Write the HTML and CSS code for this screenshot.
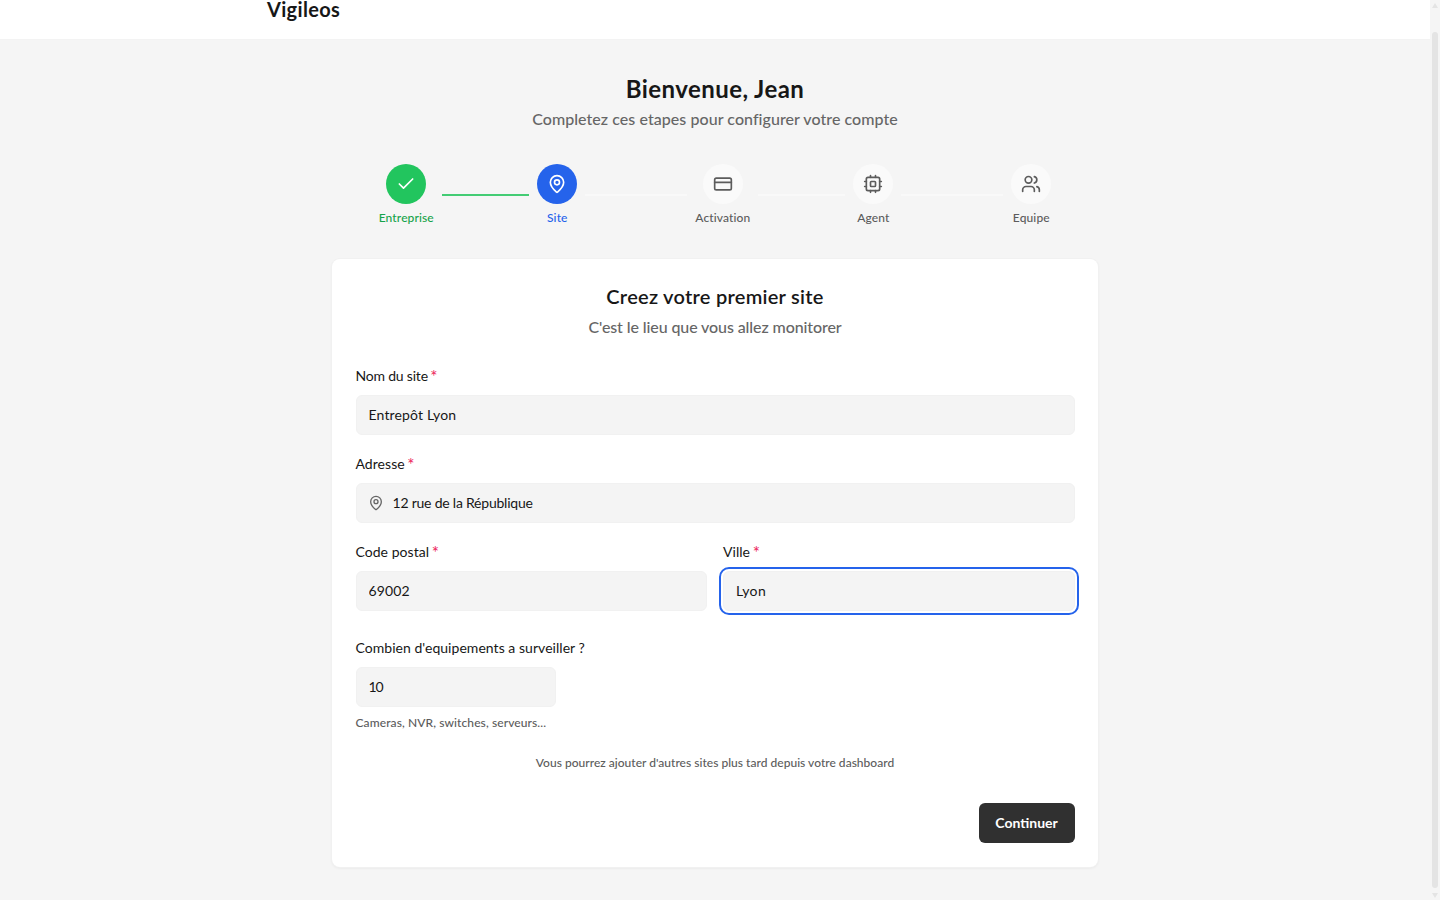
FILE: index.html
```html
<!DOCTYPE html>
<html lang="fr">
<head>
    <meta charset="UTF-8">
    <meta name="viewport" content="width=device-width, initial-scale=1.0">
    <title>Vigileos</title>
    <link rel="stylesheet" href="styles.css">
</head>
<body>
    <div class="page">
        <header class="header">
            <span class="logo">Vigileos</span>
        </header>
        <main class="main">
            <h1>Bienvenue, Jean</h1>
            <p class="intro">Completez ces etapes pour configurer votre compte</p>

            <!-- Etapes -->
            <div class="steps">
                <div class="step done">
                    <div class="circle">
                        <svg class="icon" viewBox="0 0 24 24"><path d="M20 6 9 17l-5-5"/></svg>
                    </div>
                    <span>Entreprise</span>
                </div>
                <div class="line line-done"></div>
                <div class="step current">
                    <div class="circle">
                        <svg class="icon" viewBox="0 0 24 24"><path d="M20 10c0 4.993-5.539 10.193-7.399 11.799a1 1 0 0 1-1.202 0C9.539 20.193 4 14.993 4 10a8 8 0 0 1 16 0"/><circle cx="12" cy="10" r="3"/></svg>
                    </div>
                    <span>Site</span>
                </div>
                <div class="line"></div>
                <div class="step">
                    <div class="circle">
                        <svg class="icon" viewBox="0 0 24 24"><rect width="20" height="14" x="2" y="5" rx="2"/><path d="M2 10h20"/></svg>
                    </div>
                    <span>Activation</span>
                </div>
                <div class="line"></div>
                <div class="step">
                    <div class="circle">
                        <svg class="icon" viewBox="0 0 24 24"><rect width="16" height="16" x="4" y="4" rx="2"/><rect width="6" height="6" x="9" y="9" rx="1"/><path d="M15 2v2M15 20v2M2 15h2M2 9h2M20 15h2M20 9h2M9 2v2M9 20v2"/></svg>
                    </div>
                    <span>Agent</span>
                </div>
                <div class="line"></div>
                <div class="step">
                    <div class="circle">
                        <svg class="icon" viewBox="0 0 24 24"><path d="M16 21v-2a4 4 0 0 0-4-4H6a4 4 0 0 0-4 4v2"/><circle cx="9" cy="7" r="4"/><path d="M22 21v-2a4 4 0 0 0-3-3.87M16 3.13a4 4 0 0 1 0 7.75"/></svg>
                    </div>
                    <span>Equipe</span>
                </div>
            </div>

            <!-- Formulaire du site -->
            <form class="card">
                <h2>Creez votre premier site</h2>
                <p class="subtitle">C'est le lieu que vous allez monitorer</p>

                <div class="field">
                    <label class="label-nom" for="nom">Nom du site <b>*</b></label>
                    <input class="input-nom" id="nom" type="text" value="Entrepôt Lyon">
                </div>
                <div class="field">
                    <label for="adresse">Adresse <b>*</b></label>
                    <div class="input-icon">
                        <svg class="icon" viewBox="0 0 24 24"><path d="M20 10c0 4.993-5.539 10.193-7.399 11.799a1 1 0 0 1-1.202 0C9.539 20.193 4 14.993 4 10a8 8 0 0 1 16 0"/><circle cx="12" cy="10" r="3"/></svg>
                        <input id="adresse" type="text" value="12 rue de la République">
                    </div>
                </div>
                <div class="cols">
                    <div class="field">
                        <label for="code">Code postal <b>*</b></label>
                        <input class="input-code" id="code" type="text" value="69002">
                    </div>
                    <div class="field">
                        <label for="ville">Ville <b>*</b></label>
                        <input class="input-ville focused" id="ville" type="text" value="Lyon">
                    </div>
                </div>
                <div class="field equipements">
                    <label for="nombre">Combien d'equipements a surveiller ?</label>
                    <input id="nombre" type="text" value="10">
                    <p class="hint">Cameras, NVR, switches, serveurs...</p>
                </div>

                <p class="note">Vous pourrez ajouter d'autres sites plus tard depuis votre dashboard</p>
                <div class="actions">
                    <button type="button">Continuer</button>
                </div>
            </form>
        </main>
    </div>

    <!-- Barre de defilement -->
    <div class="scrollbar">
        <i class="arrow up"></i>
        <i class="thumb"></i>
        <i class="arrow down"></i>
    </div>
</body>
</html>
```
FILE: styles.css
```css
* {
    box-sizing: border-box;
    margin: 0;
    padding: 0;
}
body {
    display: flex;
    height: 900px;
    overflow: hidden;
    background: #f5f5f5;
    color: #171717;
    font-family: Lato, "Open Sans", sans-serif;
    font-size: 14px;
    line-height: 20px;
}
.page {
    flex: 1;
}
.header {
    height: 40px;
    padding-left: 267px;
    background: #fff;
    border-bottom: 1px solid #f3f3f3;
}
.logo {
    display: block;
    font-size: 20px;
    font-weight: 700;
    line-height: 18px;
    letter-spacing: 0.32px;
}
.main {
    width: 766px;
    margin: 0 auto;
    padding-top: 33px;
}
h1 {
    font-size: 24px;
    font-weight: 700;
    line-height: 32px;
    letter-spacing: 0.45px;
    text-align: center;
}
.intro,
.subtitle {
    color: #666;
    font-size: 16px;
    font-weight: 500;
    line-height: 24px;
    text-align: center;
}
.intro {
    margin-top: 2px;
    letter-spacing: 0.05px;
}

/* Etapes */
.steps {
    display: grid;
    grid-template-columns: 56px 87px 40px 102px 55px 87px 40px 102px 40px;
    gap: 8px;
    align-items: center;
    padding-left: 46.3px;
    margin: 33px 0;
}
.step {
    display: flex;
    flex-direction: column;
    align-items: center;
    gap: 6px;
    color: #5c5c5c;
    font-size: 12px;
    font-weight: 500;
    line-height: 16px;
    letter-spacing: 0.12px;
}
.circle {
    display: flex;
    align-items: center;
    justify-content: center;
    width: 40px;
    height: 40px;
    border-radius: 50%;
    background: #fafafa;
}
.icon {
    width: 20px;
    height: 20px;
    fill: none;
    stroke: currentColor;
    stroke-width: 2;
    stroke-linecap: round;
    stroke-linejoin: round;
}
.line {
    height: 2px;
    background: #f9f9f9;
}
.line-done {
    background: #43cc74;
}
.done {
    color: #16a34a;
}
.done .circle {
    background: #22c55e;
    color: #fff;
}
.current {
    color: #2563eb;
}
.current .circle {
    background: #2563eb;
    color: #fff;
}

/* Carte */
.card {
    height: 608px;
    padding: 23px 23.5px 24px;
    border-radius: 8px;
    background: #fff;
    box-shadow: 0 0 0 1px #f1f1f1, 0 1px 3px rgba(0, 0, 0, 0.08);
}
h2 {
    font-size: 20px;
    font-weight: 600;
    line-height: 28px;
    letter-spacing: 0.26px;
    text-align: center;
}
.subtitle {
    margin: 5px 0 27px;
    letter-spacing: -0.1px;
}
.field {
    display: flex;
    flex-direction: column;
    margin-bottom: 19px;
}
label {
    height: 20px;
    margin-bottom: 9px;
    letter-spacing: 0.04px;
}
.label-nom {
    letter-spacing: -0.2px;
}
label b {
    margin-left: -1px;
    color: #ec1c5a;
    font-size: 17px;
    font-weight: 400;
    line-height: 1;
    vertical-align: -2px;
}
input {
    width: 100%;
    height: 40px;
    padding: 0 12px 2px;
    border: 1px solid #f1f1f1;
    border-radius: 6px;
    background: #f4f4f4;
    color: #171717;
    font: inherit;
    letter-spacing: -0.22px;
}
.input-nom,
.input-code {
    letter-spacing: 0.15px;
}
.input-ville {
    letter-spacing: 0.35px;
}
.input-icon {
    display: grid;
    align-items: center;
}
.input-icon > * {
    grid-area: 1 / 1;
}
.input-icon input {
    padding-left: 36px;
}
.input-icon .icon {
    z-index: 1;
    width: 16px;
    height: 16px;
    margin-left: 12px;
    color: #666;
}
.cols {
    display: grid;
    grid-template-columns: 1fr 1fr;
    gap: 16px;
}
.focused {
    outline: 2px solid #2563eb;
    outline-offset: 2px;
}
.equipements {
    margin-top: 8px;
}
.equipements input {
    width: 200px;
    letter-spacing: -1.2px;
}
.hint,
.note {
    color: #5c5c5c;
    font-size: 12px;
    font-weight: 500;
    line-height: 16px;
}
.hint {
    margin-top: 8px;
    letter-spacing: 0.1px;
}
.note {
    margin-top: 24px;
    letter-spacing: 0.02px;
    text-align: center;
}
.actions {
    display: flex;
    justify-content: flex-end;
    margin-top: 32px;
}
button {
    width: 96px;
    height: 40px;
    border: 0;
    border-radius: 6px;
    background: #303030;
    color: #fff;
    font: inherit;
    font-weight: 700;
}

/* Barre de defilement */
.scrollbar {
    display: flex;
    flex-direction: column;
    align-items: center;
    width: 10px;
    padding: 3px 0 2px;
}
.arrow {
    border: 3px solid transparent;
}
.up {
    border-top: 0;
    border-bottom: 5px solid #e4e4e4;
}
.down {
    border-bottom: 0;
    border-top: 5px solid #e4e4e4;
}
.thumb {
    flex: 1;
    width: 6px;
    margin: 24px 0 5px;
    border-radius: 3px;
    background: #e4e4e4;
}
```
